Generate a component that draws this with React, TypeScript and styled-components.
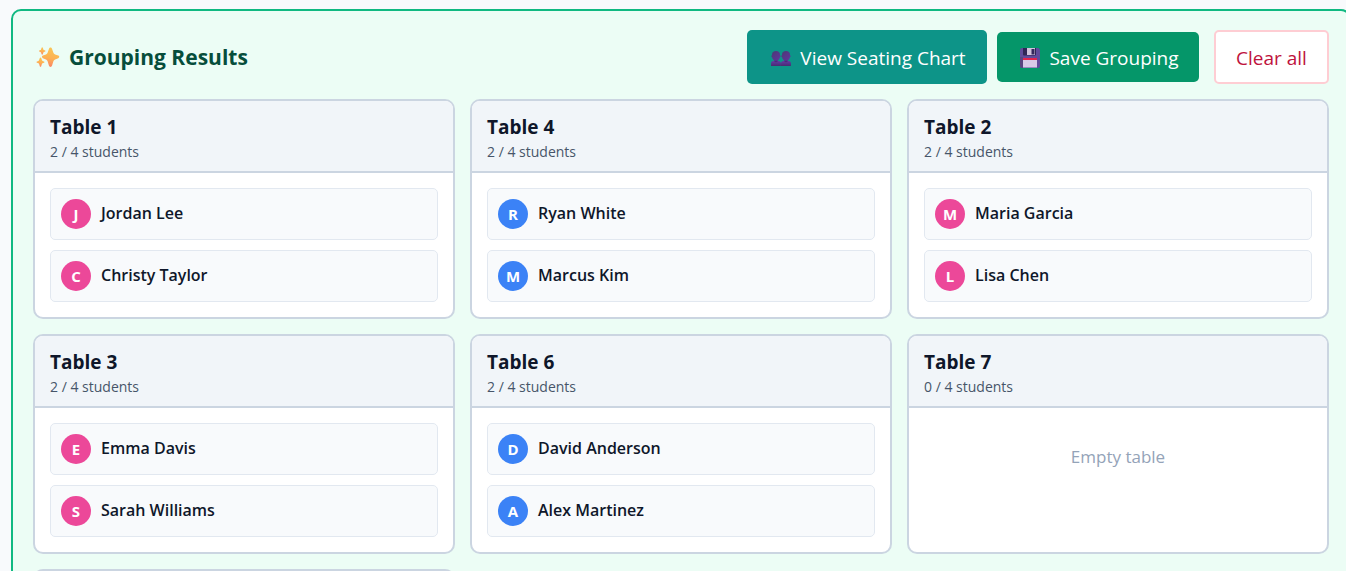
import React from "react";
import styled, { createGlobalStyle } from "styled-components";

const GlobalStyle = createGlobalStyle`
  *, *::before, *::after { box-sizing: border-box; }
  body {
    margin: 0;
    background: #f8fafc;
    color: #0f172a;
    font-family: "Segoe UI", "Open Sans", "Noto Sans", sans-serif;
  }
  h2, h3, p, ul { margin: 0; padding: 0; }
`;

const Page = styled.main`
  height: 100vh;
  overflow: hidden;
  padding: 9px 0 0 11px;
`;

const Panel = styled.section`
  margin-right: -5px;
  padding: 19px 20px 20px;
  border: 2px solid #10b981;
  border-radius: 10px;
  background: #ecfdf5;
`;

const PanelHeader = styled.header`
  display: flex;
  align-items: center;
  justify-content: space-between;
  margin-bottom: 15px;
`;

const Title = styled.h2`
  display: flex;
  align-items: center;
  gap: 9px;
  padding-left: 3px;
  color: #064e3b;
  font-size: 21px;
  line-height: 30px;
  font-weight: 700;
`;

const Actions = styled.div`
  display: flex;
  align-items: center;
`;

const Button = styled.button<{ $tone: "teal" | "green" | "outline" }>`
  display: flex;
  align-items: center;
  justify-content: center;
  gap: 9px;
  width: ${(p) => ({ teal: "240px", green: "202px", outline: "115px" })[p.$tone]};
  height: ${(p) => (p.$tone === "green" ? "50px" : "54px")};
  margin-left: ${(p) => ({ teal: "0", green: "10px", outline: "15px" })[p.$tone]};
  padding: ${(p) => (p.$tone === "outline" ? "2px 0 0" : "2px 0 0 3px")};
  border: ${(p) => (p.$tone === "outline" ? "2px solid #fecdd3" : "0")};
  border-radius: 5px;
  background: ${(p) => ({ teal: "#0d9488", green: "#059669", outline: "#fff" })[p.$tone]};
  color: ${(p) => (p.$tone === "outline" ? "#be123c" : "#fff")};
  font-family: inherit;
  font-size: 19px;
  line-height: 28px;
  cursor: pointer;
`;

const Grid = styled.div`
  display: grid;
  grid-template-columns: repeat(3, minmax(0, 1fr));
  gap: 15px;
`;

const Card = styled.article`
  display: flex;
  flex-direction: column;
  min-height: 220px;
  overflow: hidden;
  border: 2px solid #cbd5e1;
  border-radius: 10px;
  background: #fff;
`;

const CardHeader = styled.header`
  min-height: 72px;
  padding: 12px 15px 8px;
  border-bottom: 2px solid #cbd5e1;
  background: #f1f5f9;
`;

const CardTitle = styled.h3`
  font-size: 19px;
  line-height: 28px;
  font-weight: 700;
`;

const Count = styled.p`
  color: #475569;
  font-size: 14px;
  line-height: 22px;
`;

const StudentList = styled.ul`
  display: flex;
  flex-direction: column;
  gap: 10px;
  padding: 15px;
  list-style: none;
`;

const Student = styled.li`
  display: flex;
  align-items: center;
  gap: 10px;
  height: 52px;
  padding: 0 10px;
  border: 1px solid #e2e8f0;
  border-radius: 5px;
  background: #f8fafc;
`;

const Avatar = styled.span<{ $color: string }>`
  display: grid;
  place-items: center;
  width: 30px;
  height: 30px;
  border-radius: 50%;
  background: ${(p) => p.$color};
  color: #fff;
  font-size: 15px;
  line-height: 20px;
  font-weight: 700;
`;

const Name = styled.span`
  padding-bottom: 2px;
  font-size: 16px;
  line-height: 24px;
  font-weight: 600;
`;

const Empty = styled.p`
  padding: 35px 15px;
  color: #94a3b8;
  font-size: 17px;
  line-height: 28px;
  text-align: center;
`;

const SparklesIcon = () => (
  <svg width="24" height="24" viewBox="0 0 24 24" aria-hidden="true">
    <defs>
      <linearGradient id="spark" x1="0.6" y1="0" x2="0.4" y2="1">
        <stop offset="0" stopColor="#f9c655" />
        <stop offset="0.55" stopColor="#fdb254" />
        <stop offset="1" stopColor="#fb8467" />
      </linearGradient>
    </defs>
    <g fill="url(#spark)">
      <path d="M14.500 2.500c.9 0 1.300.6 1.500 1.300l1.400 4c.3.800.8 1.300 1.700 1.600l3.200 1.200c1.300.5 1.300 2.100 0 2.600l-3.200 1.300c-.9.3-1.400.9-1.700 1.700l-1.300 4.300c-.5 1.900-2.700 1.900-3.200 0l-1.300-4.300c-.3-.8-.8-1.400-1.600-1.700l-3.100-1.300c-1.200-.5-1.200-2.100 0-2.600l3.100-1.200c.8-.3 1.300-.8 1.600-1.600l1.400-4c.2-.7.6-1.300 1.500-1.300Z" />
      <path d="M6.200 2.200c.3 0 .5.2.6.5l.6 1.700c.1.3.3.5.6.6l1.100.5c.5.2.5.8 0 1L8 7c-.3.1-.5.3-.6.6l-.6 1.600c-.2.6-1 .6-1.200 0L5 7.600c-.1-.3-.3-.5-.6-.6l-1.100-.5c-.5-.2-.5-.8 0-1L4.400 5c.3-.1.5-.3.6-.6l.6-1.700c.1-.3.3-.5.6-.5Z" />
      <path d="M4.500 12.400c.4 0 .6.3.7.6l.7 2.100c.1.4.4.6.7.8l1.400.6c.6.2.6 1 0 1.200l-1.400.6c-.3.1-.6.4-.7.8l-.7 2.100c-.2.8-1.200.8-1.400 0l-.7-2.100c-.1-.4-.4-.7-.7-.8l-1.400-.6c-.6-.2-.6-1 0-1.200l1.400-.6c.3-.2.6-.4.7-.8l.7-2.100c.1-.3.3-.6.7-.6Z" />
    </g>
  </svg>
);

const PeopleIcon = () => (
  <svg width="20" height="20" viewBox="0 0 20 20" aria-hidden="true">
    <defs>
      <linearGradient id="head" x1="0" y1="0" x2="1" y2="1">
        <stop offset="0" stopColor="#493b72" />
        <stop offset="1" stopColor="#6334a0" />
      </linearGradient>
      <linearGradient id="torso" x1="0" y1="0" x2="0" y2="1">
        <stop offset="0" stopColor="#6538a8" />
        <stop offset="1" stopColor="#472c70" />
      </linearGradient>
    </defs>
    {[0, 10].map((x) => (
      <g key={x} transform={`translate(${x} 0)`}>
        <path d="M0 18v-2.400c0-1.800 1.400-2.800 3.200-2.800h3.500c1.800 0 3.200 1 3.200 2.800V18Z" fill="url(#torso)" />
        <path d="M3.400 10.500h3.200v3c-.8 1-2.400 1-3.200 0Z" fill="#4a2b78" />
        <path d="M5 3c2.500 0 4 1.400 4 3.600v.7c.8 0 .9 2-.1 2-.3 2-1.800 3.400-3.900 3.400S1.400 11.300 1.100 9.300C.1 9.300.2 7.300 1 7.300v-.7C1 4.400 2.500 3 5 3Z" fill="url(#head)" />
      </g>
    ))}
  </svg>
);

const FloppyIcon = () => (
  <svg width="20" height="20" viewBox="0 0 20 20" aria-hidden="true">
    <path d="M2 0h16.500L20 1.500V18a2 2 0 0 1-2 2H2a2 2 0 0 1-2-2V2a2 2 0 0 1 2-2Z" fill="#604b9b" />
    <path d="M0 9h3v11H2a2 2 0 0 1-2-2Z" fill="#5a4481" />
    <path d="M3 0h13v6.500a1 1 0 0 1-1 1H4a1 1 0 0 1-1-1Z" fill="#312657" />
    <path d="M7 0h8v7H7Z" fill="#cfc2db" />
    <path d="M11.500 1h3v5.500h-3Z" fill="#34285c" />
    <path d="M3 11h14v8.500H3Z" fill="#d9c9e8" />
    <path d="M3 10h14v2H3Z" fill="#e3244e" />
  </svg>
);

const PINK = "#ec4899";
const BLUE = "#3b82f6";

const tables = [
  { name: "Table 1", color: PINK, students: ["Jordan Lee", "Christy Taylor"] },
  { name: "Table 4", color: BLUE, students: ["Ryan White", "Marcus Kim"] },
  { name: "Table 2", color: PINK, students: ["Maria Garcia", "Lisa Chen"] },
  { name: "Table 3", color: PINK, students: ["Emma Davis", "Sarah Williams"] },
  { name: "Table 6", color: BLUE, students: ["David Anderson", "Alex Martinez"] },
  { name: "Table 7", color: BLUE, students: [] },
];

export default function App() {
  return (
    <Page>
      <GlobalStyle />
      <Panel>
        <PanelHeader>
          <Title>
            <SparklesIcon />
            Grouping Results
          </Title>
          <Actions>
            <Button type="button" $tone="teal">
              <PeopleIcon />
              View Seating Chart
            </Button>
            <Button type="button" $tone="green">
              <FloppyIcon />
              Save Grouping
            </Button>
            <Button type="button" $tone="outline">
              Clear all
            </Button>
          </Actions>
        </PanelHeader>
        <Grid>
          {tables.map((table) => (
            <Card key={table.name}>
              <CardHeader>
                <CardTitle>{table.name}</CardTitle>
                <Count>{table.students.length} / 4 students</Count>
              </CardHeader>
              {table.students.length > 0 ? (
                <StudentList>
                  {table.students.map((student) => (
                    <Student key={student}>
                      <Avatar $color={table.color}>{student[0]}</Avatar>
                      <Name>{student}</Name>
                    </Student>
                  ))}
                </StudentList>
              ) : (
                <Empty>Empty table</Empty>
              )}
            </Card>
          ))}
          <Card>
            <CardHeader />
          </Card>
        </Grid>
      </Panel>
    </Page>
  );
}
